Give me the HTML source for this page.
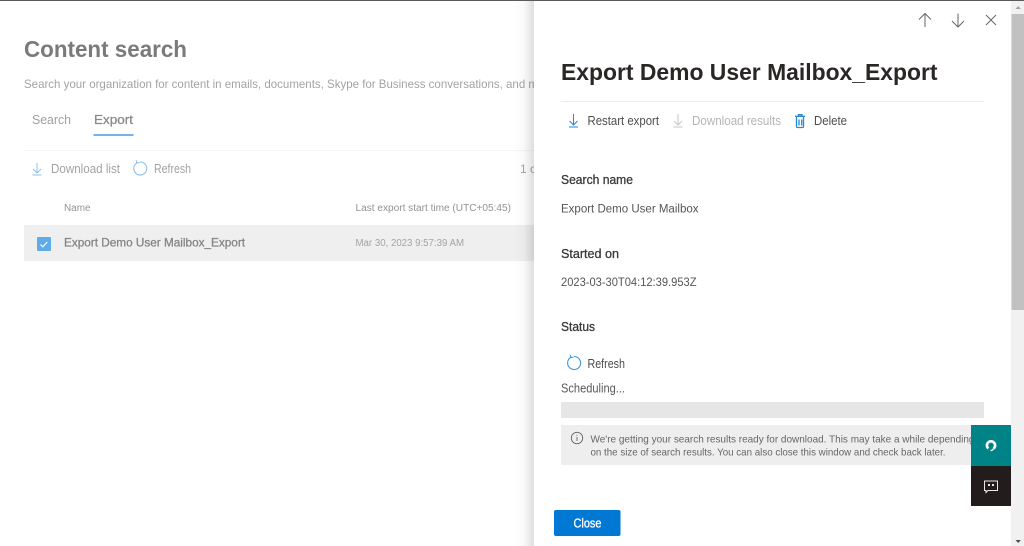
<!DOCTYPE html>
<html lang="en">
<head>
<meta charset="utf-8">
<title>Content search</title>
<style>
html,body{margin:0;padding:0;width:1024px;height:546px;overflow:hidden;background:#fff}
svg{display:block;position:absolute;left:0;top:0}
text{font-family:"Liberation Sans",sans-serif;white-space:pre}
</style>
</head>
<body>
<svg width="1024" height="546" viewBox="0 0 1024 546" xmlns="http://www.w3.org/2000/svg">
<defs>
<linearGradient id="sh" x1="0" x2="1" y1="0" y2="0">
<stop offset="0" stop-color="#000" stop-opacity="0"/>
<stop offset="0.5" stop-color="#000" stop-opacity="0.025"/>
<stop offset="1" stop-color="#000" stop-opacity="0.13"/>
</linearGradient>
<filter id="b" x="-2%" y="-2%" width="104%" height="104%"><feGaussianBlur stdDeviation="0.35"/></filter>
</defs>
<rect width="1024" height="546" fill="#fff"/>
<g filter="url(#b)">
<!-- background page -->
<text x="24" y="57" font-size="23" font-weight="700" fill="#7b7a78" textLength="163" lengthAdjust="spacingAndGlyphs">Content search</text>
<text x="24" y="88" font-size="12" fill="#a3a3a3" textLength="514" lengthAdjust="spacingAndGlyphs">Search your organization for content in emails, documents, Skype for Business conversations, and m</text>
<text x="32" y="124" font-size="13" fill="#a0a0a0" textLength="39" lengthAdjust="spacingAndGlyphs">Search</text>
<text x="94" y="124" font-size="13" fill="#8a8a8a" stroke="#8a8a8a" stroke-width="0.3" textLength="39" lengthAdjust="spacingAndGlyphs">Export</text>
<rect x="93.500" y="134" width="40" height="2" fill="#74b2e6"/>
<rect x="24" y="150" width="510" height="1" fill="#f6f6f6"/>
<g fill="none" stroke="#8fc0ea" stroke-width="1">
<path d="M37 163v10M33 169l4 4 4-4M32.500 175h9"/>
<path d="M136.800 163A6.500 6.500 0 1 0 140 162M136.300 160.300l.5 2.700 2.700-.4" stroke-width="1.100"/>
</g>
<text x="51" y="173" font-size="12.500" fill="#a3a3a3" textLength="69" lengthAdjust="spacingAndGlyphs">Download list</text>
<text x="154" y="173" font-size="12.500" fill="#a3a3a3" textLength="37" lengthAdjust="spacingAndGlyphs">Refresh</text>
<text x="520" y="173" font-size="12" fill="#a3a3a3">1 c</text>
<text x="64" y="211" font-size="10" fill="#939393" textLength="26.500" lengthAdjust="spacingAndGlyphs">Name</text>
<text x="355.500" y="211" font-size="10" fill="#939393" textLength="155.500" lengthAdjust="spacingAndGlyphs">Last export start time (UTC+05:45)</text>
<rect x="24" y="225" width="510" height="36" fill="#efefef"/>
<rect x="37" y="237" width="14" height="14" rx="1.500" fill="#5eaae8"/>
<path d="M40.500 244.500l2.300 2.300 4.500-4.800" fill="none" stroke="#fff" stroke-width="1.200"/>
<text x="64" y="246.500" font-size="12" fill="#858585" stroke="#858585" stroke-width="0.3" textLength="181" lengthAdjust="spacingAndGlyphs">Export Demo User Mailbox_Export</text>
<text x="355.500" y="246" font-size="10" fill="#a3a3a3" textLength="108.500" lengthAdjust="spacingAndGlyphs">Mar 30, 2023 9:57:39 AM</text>
<rect x="514" y="0" width="20" height="546" fill="url(#sh)"/>
<!-- panel -->
<rect x="534" y="0" width="477" height="546" fill="#fff"/>
<!-- top nav icons -->
<g fill="none" stroke="#666" stroke-width="1">
<path d="M925 27V13.500M919 19.500l6-6 6 6"/>
<path d="M958 13.500V27M952 21l6 6 6-6"/>
<path d="M986 15l10 10M996 15l-10 10"/>
</g>
<text x="561" y="80" font-size="23" font-weight="700" fill="#292827" textLength="376.500" lengthAdjust="spacingAndGlyphs">Export Demo User Mailbox_Export</text>
<rect x="561" y="101" width="423" height="1" fill="#ececec"/>
<!-- toolbar -->
<g fill="none" stroke-width="1">
<path d="M573.500 114v11M569.500 121l4 4 4-4M569 127h9" stroke="#2b88d8"/>
<path d="M678 114v11M674 121l4 4 4-4M673.500 127h9" stroke="#c6c6c6"/>
<path d="M796.500 117v9.500a1 1 0 0 0 1 1h5a1 1 0 0 0 1-1V117M795 116.300h10M798.500 116v-1.300h3.500v1.300M799 119.500v6M801.700 119.500v6" stroke="#2b88d8" stroke-width="1.300"/>
</g>
<text x="587.500" y="125" font-size="12.500" fill="#4e4d4c" textLength="71.500" lengthAdjust="spacingAndGlyphs">Restart export</text>
<text x="692" y="125" font-size="12.500" fill="#b4b4b4" textLength="89" lengthAdjust="spacingAndGlyphs">Download results</text>
<text x="814" y="125" font-size="12.500" fill="#4e4d4c" textLength="33" lengthAdjust="spacingAndGlyphs">Delete</text>
<!-- details -->
<text x="561" y="184" font-size="12.500" fill="#3b3a39" stroke="#3b3a39" stroke-width="0.3" textLength="72" lengthAdjust="spacingAndGlyphs">Search name</text>
<text x="561" y="212.500" font-size="11.500" fill="#555" textLength="137.500" lengthAdjust="spacingAndGlyphs">Export Demo User Mailbox</text>
<text x="561" y="258" font-size="12.500" fill="#3b3a39" stroke="#3b3a39" stroke-width="0.3" textLength="58" lengthAdjust="spacingAndGlyphs">Started on</text>
<text x="561" y="286" font-size="11.500" fill="#555" textLength="135.500" lengthAdjust="spacingAndGlyphs">2023-03-30T04:12:39.953Z</text>
<text x="561" y="331" font-size="12.500" fill="#3b3a39" stroke="#3b3a39" stroke-width="0.3" textLength="34" lengthAdjust="spacingAndGlyphs">Status</text>
<path d="M570.800 357.400A6.500 6.500 0 1 0 574 356.500M570.300 354.800l.5 2.700 2.700-.4" fill="none" stroke="#3f97dc" stroke-width="1.100"/>
<text x="587.500" y="368" font-size="12.500" fill="#4e4d4c" textLength="37.500" lengthAdjust="spacingAndGlyphs">Refresh</text>
<text x="561" y="392.500" font-size="12.500" fill="#5a5a5a" textLength="64" lengthAdjust="spacingAndGlyphs">Scheduling...</text>
<rect x="561" y="402" width="423" height="16" fill="#e6e6e6"/>
<rect x="561" y="425" width="423" height="40" fill="#eeeeee"/>
<circle cx="577" cy="438" r="5.700" fill="none" stroke="#666" stroke-width="0.900"/>
<path d="M577 437v4M577 434.800v1" stroke="#666" stroke-width="0.900" fill="none"/>
<text x="590.500" y="442.500" font-size="10.500" fill="#666" textLength="384" lengthAdjust="spacingAndGlyphs">We're getting your search results ready for download. This may take a while depending</text>
<text x="590.500" y="455.500" font-size="10.500" fill="#666" textLength="355" lengthAdjust="spacingAndGlyphs">on the size of search results. You can also close this window and check back later.</text>
<!-- close -->
<rect x="554" y="510" width="66.500" height="26" rx="2" fill="#0078d4"/>
<text x="573.500" y="527.500" font-size="12.500" fill="#fff" stroke="#fff" stroke-width="0.3" textLength="28" lengthAdjust="spacingAndGlyphs">Close</text>
<!-- floating -->
<rect x="971" y="425" width="40" height="41" fill="#038387"/>
<path d="M988.300 448.500A4.100 4.100 0 1 1 993.700 448.500" fill="none" stroke="#fff" stroke-width="2.600"/>
<path d="M993.500 448.500c-.4 1.500-1.600 2-3 2" fill="none" stroke="#fff" stroke-width="1.400"/>
<rect x="971" y="466" width="40" height="40" fill="#201f1e"/>
<path d="M984.500 481h13v9.500h-9.500l-2 2v-2h-1.500z" fill="none" stroke="#e8e8e8" stroke-width="1"/>
<path d="M988 484h2v2h-2zM992 484h2v2h-2z" fill="#e8e8e8"/>
<!-- scrollbar -->
<rect x="1011" y="0" width="13" height="546" fill="#f1f1f1"/>
<rect x="1011.500" y="14" width="12.500" height="296" fill="#c1c1c1"/>
<path d="M1015.500 9l2.700-3 2.700 3z" fill="#a3a3a3"/>
<path d="M1015.500 540l2.700 3 2.700-3z" fill="#505050"/>
</g>
<rect x="0" y="0" width="1024" height="1" fill="#5a5a5a"/>
</svg>
</body>
</html>
